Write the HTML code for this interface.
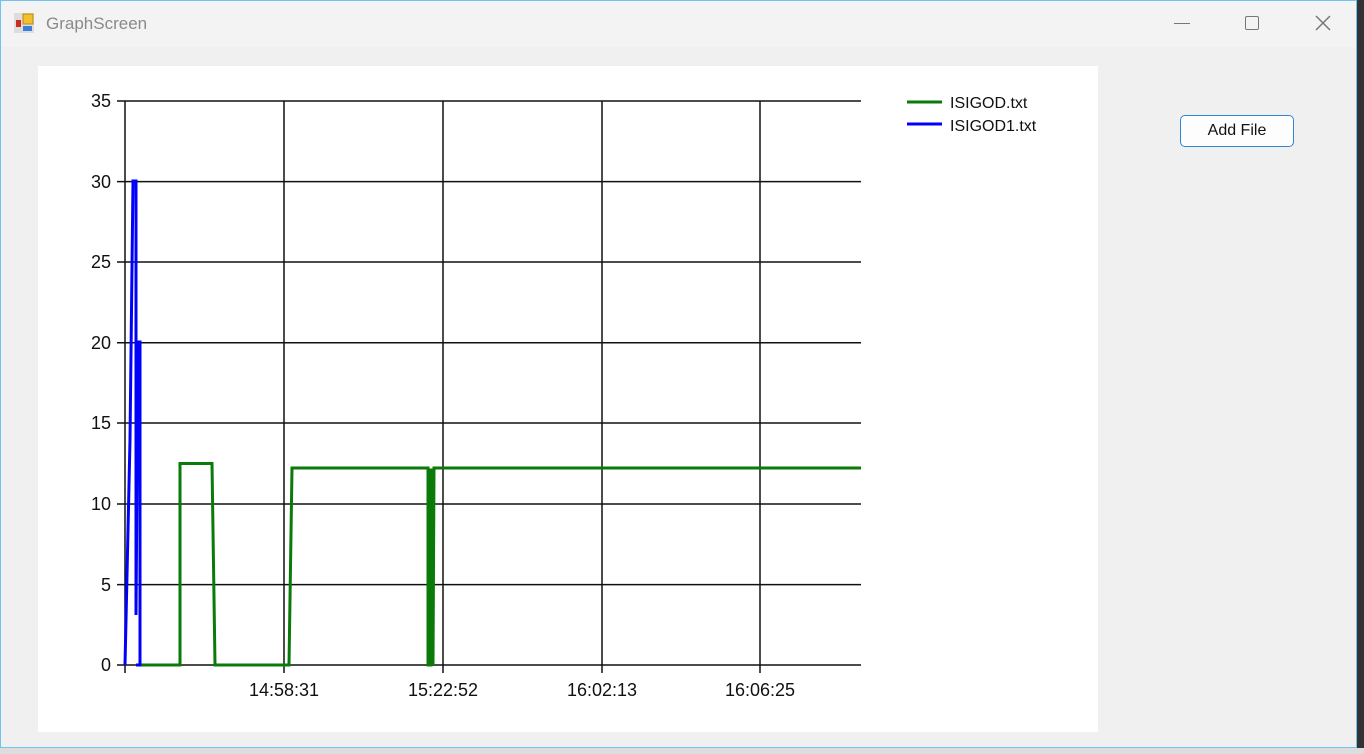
<!DOCTYPE html>
<html><head><style>
html,body{margin:0;padding:0;width:1364px;height:754px;overflow:hidden;background:#f0f0f0;font-family:"Liberation Sans",sans-serif}
.win{position:absolute;left:0;top:0;width:1357px;height:748px;border:1px solid #6fc3ee;background:#f0f0f0;box-sizing:border-box}
.title{position:absolute;left:0;top:0;width:100%;height:46px;background:#f3f3f3}
.tt{position:absolute;left:45px;top:13px;font-size:17px;color:#8a8a8a}
.btn{position:absolute;left:1180px;top:115px;width:114px;height:32px;border:1.5px solid #2f85d6;border-radius:5px;background:#fdfdfd;box-sizing:border-box;font-size:16px;text-align:center;line-height:29px;color:#111}
.chart{position:absolute;left:38px;top:66px;width:1060px;height:666px;background:#fff}
</style></head><body>
<div style="position:absolute;left:1357px;top:0;width:7px;height:754px;background:#333"></div>
<div style="position:absolute;left:0;top:748px;width:1364px;height:6px;background:#ddd"></div>
<div class="win">
<div class="title">
<svg style="position:absolute;left:12px;top:11px" width="22" height="22" viewBox="0 0 22 22">
<rect x="1" y="1" width="20" height="20" fill="#ddd"/>
<rect x="10" y="2" width="10" height="10" fill="#f2c12e" stroke="#b98c10"/>
<rect x="3" y="8" width="5" height="7" fill="#d0281e"/>
<rect x="10" y="14" width="9" height="5" fill="#3a7fd9"/>
</svg>
<div class="tt">GraphScreen</div>
<div style="position:absolute;left:1173px;top:22px;width:16px;height:1px;background:#777"></div>
<div style="position:absolute;left:1244px;top:15px;width:12px;height:12px;border:1.5px solid #777;border-radius:2px"></div>
<svg style="position:absolute;left:1314px;top:14px" width="16" height="16"><path d="M1 1L15 15M15 1L1 15" stroke="#777" stroke-width="1.5"/></svg>
</div>
</div>
<div class="chart"></div>
<svg style="position:absolute;left:0;top:0" width="1364" height="754">
<g stroke="#111" stroke-width="1.5" fill="none">
<path d="M117 101H861M117 181.6H861M117 262H861M117 342.7H861M117 423H861M117 504H861M117 584.6H861M117 665H861"/>
<path d="M125 101V673M284 101V673M443 101V673M602 101V673M760 101V673"/>
</g>
<g font-size="18" fill="#111" text-anchor="end">
<text x="111" y="107">35</text><text x="111" y="188">30</text><text x="111" y="268">25</text><text x="111" y="349">20</text><text x="111" y="429">15</text><text x="111" y="510">10</text><text x="111" y="591">5</text><text x="111" y="671">0</text>
</g>
<g font-size="18" fill="#111" text-anchor="middle">
<text x="284" y="696">14:58:31</text><text x="443" y="696">15:22:52</text><text x="602" y="696">16:02:13</text><text x="760" y="696">16:06:25</text>
</g>
<path d="M136 665H180V463.5H212L215 665H289L292 468H428V665H431V470H433V665L434 468H861" stroke="#0a7a0a" stroke-width="3" fill="none"/>
<path d="M125 665L130 440L133 181H136V615L138 342H140V665H136" stroke="#0000ff" stroke-width="3" fill="none"/>
<path d="M907 102H942" stroke="#0a7a0a" stroke-width="3"/>
<path d="M907 124H942" stroke="#0000ff" stroke-width="3"/>
<g font-size="16" fill="#111"><text x="950" y="108">ISIGOD.txt</text><text x="950" y="131">ISIGOD1.txt</text></g>
</svg>
<div class="btn">Add File</div>
</body></html>
